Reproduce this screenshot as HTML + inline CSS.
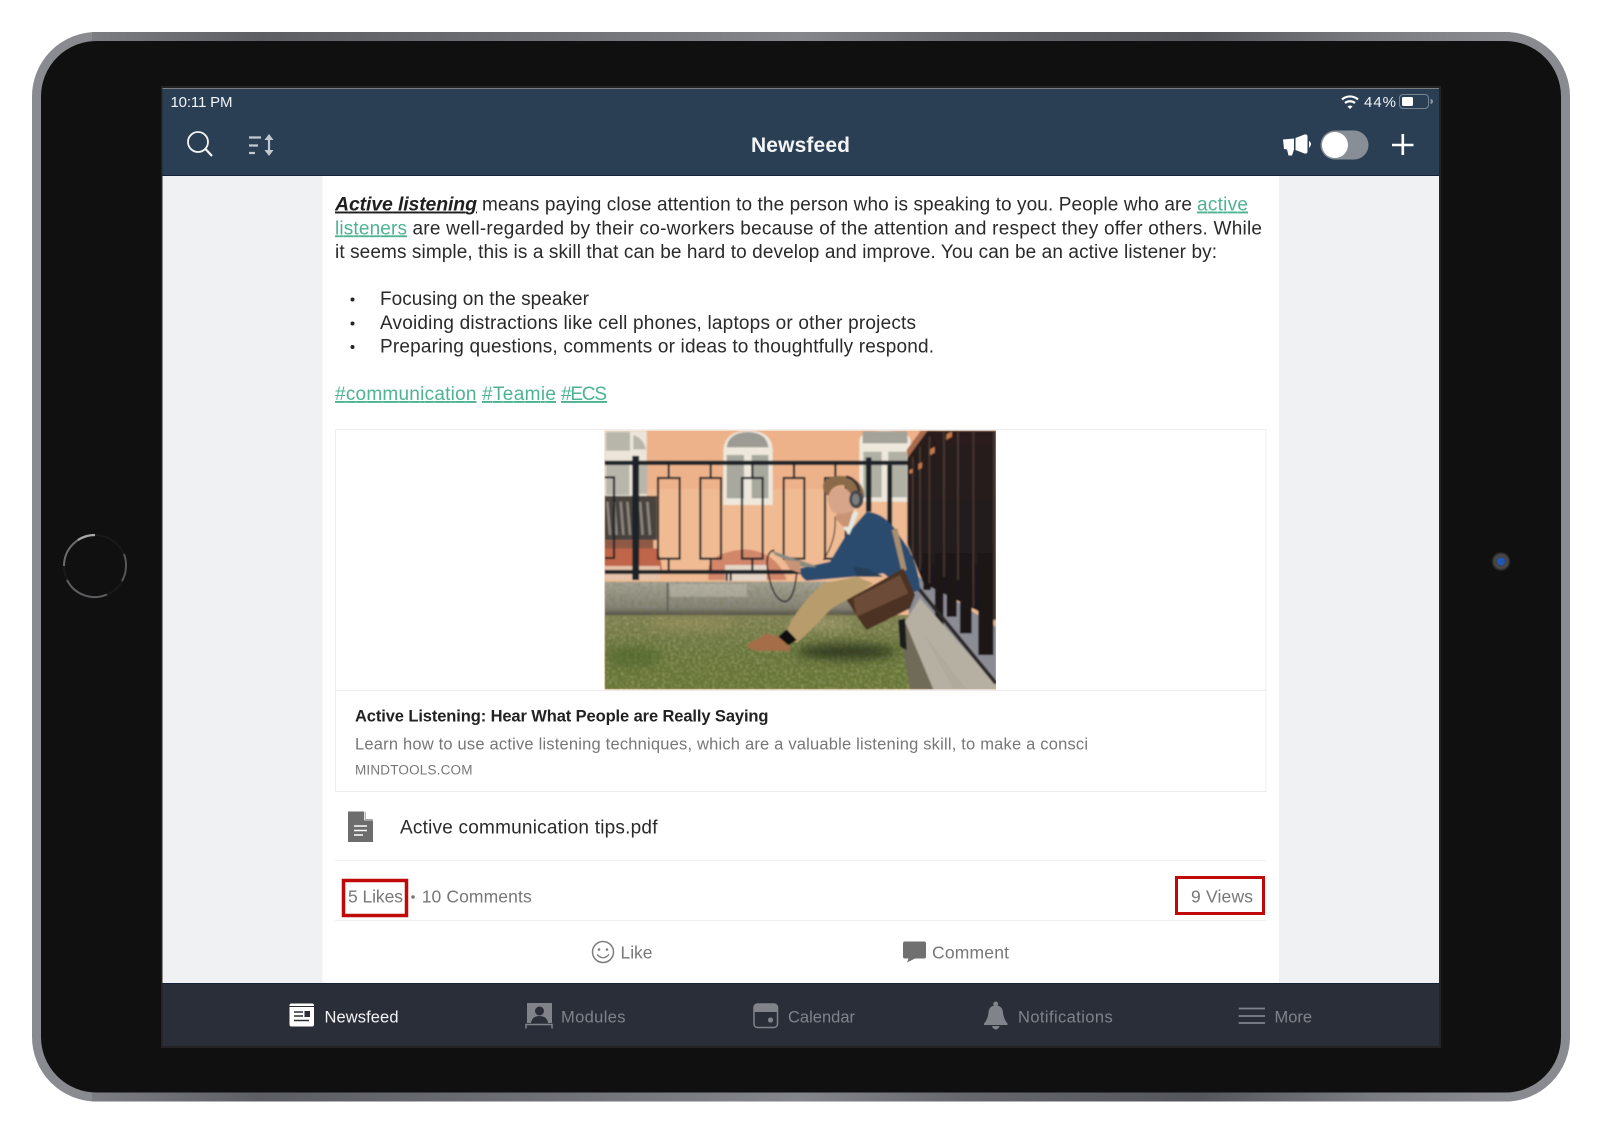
<!DOCTYPE html>
<html><head><meta charset="utf-8"><title>Newsfeed</title>
<style>
html,body{margin:0;padding:0;background:#fff}
svg{display:block}
text{font-family:"Liberation Sans",sans-serif}
.b{font-size:19px;fill:#2a2a2a}
.l{font-size:19px;fill:#4db391;text-decoration:underline}
.g{font-size:17.500px;fill:#777}
.t{font-size:16.500px;fill:#80838a}
</style></head><body>
<svg width="1600" height="1134" viewBox="0 0 1600 1134" xmlns="http://www.w3.org/2000/svg">
<defs>
<linearGradient id="fr" gradientUnits="userSpaceOnUse" x1="90" y1="0" x2="1510" y2="0">
<stop offset="0" stop-color="#7d7e83"/><stop offset=".12" stop-color="#5d5e63"/><stop offset=".3" stop-color="#6d6e73"/><stop offset=".5" stop-color="#85868b"/><stop offset=".62" stop-color="#65666b"/><stop offset=".78" stop-color="#55565b"/><stop offset=".9" stop-color="#7a7b80"/><stop offset="1" stop-color="#8b8c91"/>
</linearGradient>
<radialGradient id="cam"><stop offset="0" stop-color="#333"/><stop offset=".7" stop-color="#4a4a4a"/><stop offset="1" stop-color="#1a1a1a"/></radialGradient>
<linearGradient id="gr" x1="0" y1="0" x2="0" y2="1"><stop offset="0" stop-color="#7f7f52"/><stop offset=".5" stop-color="#667439"/><stop offset="1" stop-color="#647433"/></linearGradient>
<linearGradient id="wl" x1="0" y1="0" x2="0" y2="1"><stop offset="0" stop-color="#a7a396"/><stop offset=".75" stop-color="#868276"/><stop offset="1" stop-color="#47443d"/></linearGradient>
<linearGradient id="fd" x1="0" y1="0" x2="0" y2="1"><stop offset="0" stop-color="#2a1f1f"/><stop offset=".7" stop-color="#201a1c"/><stop offset="1" stop-color="#17161a"/></linearGradient>
<filter id="bl" x="-2%" y="-2%" width="104%" height="104%"><feGaussianBlur stdDeviation="2.400"/></filter>
<filter id="bs" x="-20%" y="-20%" width="140%" height="140%"><feGaussianBlur stdDeviation="14"/></filter>
<filter id="nd" x="0" y="0" width="100%" height="100%"><feTurbulence type="fractalNoise" baseFrequency=".09" numOctaves="3" seed="4"/><feColorMatrix values="0 0 0 0 .14  0 0 0 0 .18  0 0 0 0 .06  0 0 0 2.400 -1"/><feComposite in2="SourceGraphic" operator="in"/></filter>
<filter id="nl" x="0" y="0" width="100%" height="100%"><feTurbulence type="fractalNoise" baseFrequency=".12" numOctaves="3" seed="9"/><feColorMatrix values="0 0 0 0 .66  0 0 0 0 .64  0 0 0 0 .36  0 0 0 2.400 -1"/><feComposite in2="SourceGraphic" operator="in"/></filter>
<clipPath id="ic"><rect x="44" y="32" width="1174" height="776"/></clipPath>
</defs>
<rect width="1600" height="1134" fill="#fff"/>
<!-- device -->
<rect x="36.500" y="36.500" width="1529" height="1060.500" rx="60" ry="60" fill="#101010" stroke="#8a8b90" stroke-width="9"/>
<rect x="92" y="32" width="1418" height="9" fill="url(#fr)"/>
<rect x="92" y="1092.500" width="1418" height="9" fill="url(#fr)"/>
<!-- home -->
<circle cx="95" cy="566" r="31" fill="none" stroke="#191919" stroke-width="2"/>
<path d="M95 535A31 31 0 0 0 64 566" fill="none" stroke="#6c6c70" stroke-width="2"/>
<path d="M95 535A31 31 0 0 0 78 540" fill="none" stroke="#a8a8aa" stroke-width="2.200"/>
<path d="M67 580A31 31 0 0 0 107 594.500" fill="none" stroke="#5e5e62" stroke-width="2"/>
<path d="M126 566A31 31 0 0 0 124 554M126 566A31 31 0 0 1 122 581" fill="none" stroke="#55555a" stroke-width="2"/>
<!-- camera -->
<circle cx="1501" cy="561.500" r="9.500" fill="url(#cam)"/><circle cx="1501" cy="561.500" r="4" fill="#1f55b5"/>
<!-- screen -->
<rect x="161" y="86" width="1280" height="962" fill="#232323"/>
<rect x="162.500" y="88" width="1276.500" height="958" fill="#f0f1f3"/>
<rect x="162.500" y="88" width="1276.500" height="1" fill="#7b7d7e"/>
<rect x="162.500" y="89" width="1276.500" height="87" fill="#2a3f54"/>
<rect x="162.500" y="175" width="1276.500" height="1" fill="#142238"/>
<rect x="322.500" y="176" width="956.500" height="807" fill="#fff"/>
<!-- status -->
<text x="170.500" y="107" font-size="15px" fill="#f2f4f6" textLength="62" lengthAdjust="spacing">10:11 PM</text>
<g fill="none" stroke="#fff" stroke-width="2.200" stroke-linecap="butt">
<path d="M1342 99.500A12 12 0 0 1 1358 99.500"/><path d="M1345 103A8 8 0 0 1 1355 103"/>
</g><path d="M1347.500 106.500a4 4 0 0 1 5 0L1350 109Z" fill="#fff"/>
<text x="1364" y="107" font-size="15px" fill="#f2f4f6" textLength="32" lengthAdjust="spacing">44%</text>
<rect x="1399.500" y="94.500" width="29" height="14" rx="3.500" fill="none" stroke="#77838f" stroke-width="1"/>
<rect x="1402" y="97" width="11" height="9" rx="1.500" fill="#fff"/>
<path d="M1430.500 99v5a2.500 2.500 0 0 0 0-5Z" fill="#8c96a0"/>
<!-- header -->
<circle cx="198" cy="142" r="10" fill="none" stroke="#f4f5f6" stroke-width="1.800"/>
<path d="M205.500 149L212 156" stroke="#f4f5f6" stroke-width="2.200"/>
<g stroke="#c3c9cf" stroke-width="2.200"><path d="M249 137.500H261M249 145.500H258M249 153H255"/><path d="M269 137V153"/></g>
<path d="M264.500 140L269 134L273.500 140ZM264.500 150L269 156L273.500 150Z" fill="#c3c9cf"/>
<text x="751" y="152" font-size="21px" font-weight="bold" fill="#f2f4f5" textLength="99" lengthAdjust="spacing">Newsfeed</text>
<path d="M1283 139.500L1294 138.500V149.500L1292 155.500H1288.500L1287 149.500L1284 149ZM1295.500 138L1304.500 134.500Q1307 134 1307.500 136V152Q1307 154 1304.500 153.500L1295.500 150Z" fill="#fff"/>
<path d="M1309.500 142Q1311.500 144 1309.500 146.500Z" fill="#fff" stroke="#fff"/>
<rect x="1320.500" y="130.500" width="48" height="29" rx="14.500" fill="#878e96"/>
<circle cx="1335" cy="145" r="13" fill="#fff"/>
<path d="M1392 145H1413.500M1402.800 134V155" stroke="#fff" stroke-width="2.600"/>
<!-- body text -->
<text x="335" y="210.500" font-size="19.500px" font-weight="bold" font-style="italic" fill="#1f1f1f" text-decoration="underline" textLength="142" lengthAdjust="spacing">Active listening</text>
<text x="482" y="210.500" class="b" textLength="710" lengthAdjust="spacing">means paying close attention to the person who is speaking to you. People who are</text>
<text x="1197" y="210.500" class="l" textLength="51" lengthAdjust="spacing">active</text>
<text x="335" y="234.300" class="l" textLength="72" lengthAdjust="spacing">listeners</text>
<text x="412.500" y="234.300" class="b" textLength="849.500" lengthAdjust="spacing">are well-regarded by their co-workers because of the attention and respect they offer others. While</text>
<text x="335" y="258" class="b" textLength="882" lengthAdjust="spacing">it seems simple, this is a skill that can be hard to develop and improve. You can be an active listener by:</text>
<circle cx="352.500" cy="299.500" r="2" fill="#262626"/><circle cx="352.500" cy="323.500" r="2" fill="#262626"/><circle cx="352.500" cy="347" r="2" fill="#262626"/>
<text x="380" y="305" class="b" textLength="209" lengthAdjust="spacing">Focusing on the speaker</text>
<text x="380" y="329" class="b" textLength="536" lengthAdjust="spacing">Avoiding distractions like cell phones, laptops or other projects</text>
<text x="380" y="352.500" class="b" textLength="554" lengthAdjust="spacing">Preparing questions, comments or ideas to thoughtfully respond.</text>
<text x="335" y="400" class="l" textLength="141.500" lengthAdjust="spacing">#communication</text>
<text x="482" y="400" class="l" textLength="74" lengthAdjust="spacing">#Teamie</text>
<text x="561" y="400" class="l" textLength="46" lengthAdjust="spacing">#ECS</text>
<!-- card -->
<rect x="335.500" y="429.500" width="930.500" height="362" fill="#fff" stroke="#efefef"/>
<rect x="336" y="690" width="930" height="1" fill="#ececec"/>
<!-- photo -->
<g transform="translate(590,420) scale(.33333)" clip-path="url(#ic)">
<g filter="url(#bl)">
<rect x="40" y="28" width="1182" height="784" fill="#f0bb93"/>
<rect x="40" y="28" width="1000" height="180" fill="#eeb28b"/>
<!-- windows -->
<path d="M44 32H170V245H44Z" fill="#ece6da"/><path d="M48 36H120V92H48ZM130 45Q160 55 168 88H130ZM48 125H118V225H48ZM148 135H172V222H148Z" fill="#b8b6aa"/>
<path d="M400 255V90Q405 32 475 32Q545 32 548 90V255Z" fill="#eee8dc"/>
<path d="M410 82Q415 38 475 36Q530 38 535 82Z" fill="#9c9c94"/><path d="M410 105H462V235H410ZM485 105H535V235H485Z" fill="#a7a89e"/>
<path d="M808 245V60Q812 32 885 32Q955 32 962 60V245Z" fill="#eee8dc"/>
<path d="M818 70V34H952V70Z" fill="#a3a399"/><path d="M820 95H875V232H820ZM895 95H950V232H895Z" fill="#b0b0a4"/>
<!-- balcony, arches -->
<path d="M44 228H200V360H44Z" fill="#48423e"/><path d="M52 245l8 100M72 245l8 100M92 245l8 100M112 245l8 100M150 245l8 100M172 245l8 100" stroke="#8a857f" stroke-width="8"/>
<path d="M44 360H190V385H44Z" fill="#8f5a44"/>
<path d="M44 385H200Q215 420 215 450H44Z" fill="#c0654a"/>
<path d="M44 438H210V480H44Z" fill="#e6c3aa"/>
<path d="M355 480V440Q370 395 465 388Q560 395 590 480Z" fill="#d2866a"/>
<path d="M405 435H530V482H405Z" fill="#e4d6c6"/>
<!-- fence -->
<g fill="none" stroke="#1d2127" stroke-width="6">
<rect x="204" y="174" width="65" height="242"/><rect x="331" y="174" width="62" height="242"/><rect x="456" y="174" width="62" height="242"/><rect x="581" y="174" width="62" height="242"/><rect x="705" y="174" width="62" height="242"/><path d="M44 172H72V414H44"/>
<path d="M236 130V174M362 130V174M487 130V174M612 130V174M736 130V174M236 416V455M362 416V455M487 416V455M612 416V455M410 455V482M422 455V482"/>
</g>
<path d="M44 122H955V135H44Z" fill="#1e2228"/>
<path d="M44 450H640V462H44Z" fill="#1f2328"/>
<path d="M127 108H147V480H127ZM828 112H844V275H828ZM892 135H906V320H892Z" fill="#1d2127"/>
<!-- wall -->
<path d="M44 485H800V590H44Z" fill="url(#wl)"/>
<rect x="44" y="485" width="756" height="100" fill="#fff" filter="url(#nd)" opacity=".4"/>
<path d="M230 488H235V580H230Z" fill="#5e5b52"/>
<path d="M240 492H470V530H240Z" fill="#c2bdb0" opacity=".5"/>
<!-- grass -->
<path d="M44 585H960V808H44Z" fill="url(#gr)"/>
<rect x="44" y="590" width="916" height="218" fill="#fff" filter="url(#nd)" opacity=".45"/>
<rect x="44" y="590" width="916" height="218" fill="#fff" filter="url(#nl)" opacity=".4"/>
<g filter="url(#bs)"><ellipse cx="300" cy="612" rx="130" ry="14" fill="#9c9460" opacity=".7"/><ellipse cx="690" cy="612" rx="100" ry="14" fill="#a8a074" opacity=".7"/><ellipse cx="770" cy="695" rx="150" ry="24" fill="#26301b" opacity=".8"/><ellipse cx="130" cy="710" rx="80" ry="30" fill="#4d6228" opacity=".6"/></g>
<!-- right: steps, bars, rail, ledge -->
<path d="M952 370L985 470L1218 620V808H960Z" fill="#8c8c94"/>
<path d="M952 112L1012 32H1218V600L1000 490L952 370Z" fill="url(#fd)"/>
<path d="M1035 400H1060V625H1035ZM1070 400H1100V590H1070ZM1110 400H1145V640H1110ZM1165 400H1210V705H1165ZM1000 400H1022V510H1000Z" fill="#1a1719"/>
<path d="M968 110V420M990 80V450M1018 50V490M1062 32V470M1104 32V480M1150 32V560M1212 32V600" stroke="#4a3831" stroke-width="5"/>
<path d="M1070 42L1086 34V50L1068 60ZM1020 88L1034 80V98L1020 106ZM985 132L996 126V143L985 150ZM958 150L968 146V158L958 162Z" fill="#c47a4c"/>
<path d="M952 115L1012 32H992L950 90Z" fill="#a86c4e"/>
<path d="M925 610L945 600L1030 808H960Z" fill="#6f6b58"/>
<path d="M945 605L990 535L1218 795V808H1030Z" fill="#b6b0a2"/>
<path d="M1090 808L1000 640L1130 808Z" fill="#a9a395" opacity=".5"/>
<path d="M985 505L1218 790" stroke="#2c2826" stroke-width="11"/>
<path d="M925 600L945 595L950 690L930 680Z" fill="#1d1b1a"/>
<!-- person: legs -->
<path d="M600 610Q640 540 700 490L800 470L850 490L790 530Q730 560 720 570Q670 625 620 670L585 640Z" fill="#b89c6c"/>
<path d="M565 650L590 628L620 660L595 676Z" fill="#111"/>
<path d="M470 675L530 640L565 650L600 680L600 692H500Q475 688 470 675Z" fill="#a66d49"/>
<!-- person: jacket -->
<path d="M765 350L830 275Q890 280 930 350Q985 420 990 510L960 520L880 460L790 470L650 482Q628 470 630 445L720 425Z" fill="#2c4b6e"/>
<path d="M800 470L880 470L830 445L790 440Z" fill="#27405a"/>
<path d="M760 325L795 270L805 280L778 345Z" fill="#e8e8e0"/>
<!-- strap, bag -->
<path d="M905 330L922 325L950 450L935 455Z" fill="#a88e70"/>
<path d="M770 540L940 445L975 525L960 565L830 630L815 610Z" fill="#4b3223"/>
<path d="M790 535L930 465L955 520L800 590Z" fill="#6c4b37"/>
<!-- tablet, hand, cable -->
<path d="M545 392L670 435L680 442L635 440L555 405Z" fill="#898a80"/>
<path d="M580 418L630 425L632 460L600 448Z" fill="#c99376"/>
<path d="M553 390Q528 395 532 440Q545 540 585 545Q612 540 620 460" fill="none" stroke="#16181c" stroke-width="4"/>
<path d="M735 290Q740 360 700 420" fill="none" stroke="#22252a" stroke-width="3"/>
<!-- head -->
<path d="M735 295L745 270L790 270L775 320L760 320Z" fill="#c99376"/>
<path d="M712 240Q715 205 755 198L795 225L790 270Q760 290 725 275Z" fill="#d7a589"/>
<path d="M700 190Q720 160 775 170Q825 185 822 235L785 225L760 195Q725 195 715 228Q695 215 700 190Z" fill="#8a6a48"/>
<path d="M768 170Q800 175 808 215" fill="none" stroke="#2a2c30" stroke-width="7"/>
<ellipse cx="799" cy="238" rx="21" ry="27" fill="#44474a"/><ellipse cx="797" cy="238" rx="11" ry="17" fill="#7b7e80"/>
</g></g>
<text x="355" y="721.300" font-size="16.500px" font-weight="bold" fill="#222" textLength="413.500" lengthAdjust="spacing">Active Listening: Hear What People are Really Saying</text>
<text x="355" y="749.300" font-size="16.500px" fill="#777" textLength="733" lengthAdjust="spacing">Learn how to use active listening techniques, which are a valuable listening skill, to make a consci</text>
<text x="355" y="774.300" font-size="13.500px" fill="#777" textLength="117.500" lengthAdjust="spacing">MINDTOOLS.COM</text>
<!-- file -->
<path d="M348 811.500H365L373 819.500V842H348Z" fill="#6d6d6d"/>
<path d="M365.500 811.500V819H373Z" fill="#fff"/><path d="M364.500 811V820H373.500" fill="none" stroke="#fff" stroke-width=".8"/>
<path d="M354 826H367M354 830.500H367M354 835H363" stroke="#fff" stroke-width="1.500"/>
<text x="400" y="833.500" class="b" textLength="257.500" lengthAdjust="spacing">Active communication tips.pdf</text>
<rect x="335" y="860" width="931" height="1" fill="#efefef"/>
<rect x="335" y="920" width="931" height="1" fill="#f0f0f0"/>
<!-- stats -->
<text x="348" y="902.300" class="g" textLength="55" lengthAdjust="spacing">5 Likes</text>
<circle cx="413" cy="897" r="1.800" fill="#777"/>
<text x="421.700" y="902.300" class="g" textLength="110" lengthAdjust="spacing">10 Comments</text>
<text x="1191" y="902.300" class="g" textLength="62" lengthAdjust="spacing">9 Views</text>
<rect x="343.500" y="880.500" width="63" height="35" fill="none" stroke="#c00a0a" stroke-width="3.500"/>
<rect x="1176.500" y="877.500" width="87" height="36" fill="none" stroke="#c00a0a" stroke-width="3"/>
<!-- actions -->
<circle cx="603" cy="952" r="10.500" fill="none" stroke="#7d7d7d" stroke-width="1.500"/>
<circle cx="599" cy="949.500" r="1.300" fill="#7d7d7d"/><circle cx="607" cy="949.500" r="1.300" fill="#7d7d7d"/>
<path d="M597 954.500Q603 961 609 954.500" fill="none" stroke="#7d7d7d" stroke-width="1.300"/>
<text x="620.500" y="958.300" class="g" textLength="32" lengthAdjust="spacing">Like</text>
<path d="M905 941.500H924Q926 941.500 926 943.500V956.500Q926 958.500 924 958.500H915L907 962.500L908.500 958.500H905Q903 958.500 903 956.500V943.500Q903 941.500 905 941.500Z" fill="#707070"/>
<text x="932" y="958.300" class="g" textLength="77" lengthAdjust="spacing">Comment</text>
<!-- tab bar -->
<rect x="162.500" y="983" width="1276.500" height="63" fill="#2a2e39"/>
<rect x="162.500" y="983" width="1276.500" height="1" fill="#15203a"/>
<rect x="289.500" y="1003.500" width="24.500" height="23" rx="2" fill="#fff"/>
<rect x="289.500" y="1006" width="24.500" height="1" fill="#2a2e39"/>
<path d="M294 1012H303M294 1016H303M294 1020.500H309" stroke="#2a2e39" stroke-width="1.400"/><rect x="304.500" y="1011" width="5.500" height="6" fill="#2a2e39"/>
<text x="324.500" y="1022.500" font-size="16.500px" fill="#f2f3f4" textLength="74" lengthAdjust="spacing">Newsfeed</text>
<rect x="527" y="1003" width="25" height="20" fill="#80838a"/>
<circle cx="539.500" cy="1011" r="4.500" fill="#2a2e39"/><path d="M531 1023Q532 1016 539.500 1016Q547 1016 548 1023Z" fill="#2a2e39"/>
<path d="M526 1028.500V1024.500H552V1028.500" fill="none" stroke="#80838a" stroke-width="1.500"/>
<text x="561" y="1022.500" class="t" textLength="64.500" lengthAdjust="spacing">Modules</text>
<rect x="754" y="1004" width="23.500" height="23.500" rx="3.500" fill="none" stroke="#80838a" stroke-width="1.500"/>
<path d="M754 1012V1007.500Q754 1004 757.500 1004H774Q777.500 1004 777.500 1007.500V1012Z" fill="#80838a"/>
<circle cx="770.500" cy="1020" r="2.600" fill="#80838a"/>
<text x="788" y="1022.500" class="t" textLength="67" lengthAdjust="spacing">Calendar</text>
<circle cx="995.700" cy="1004" r="2.500" fill="#80838a"/>
<path d="M984 1023.500Q988 1019 988.500 1012Q989.500 1005.500 995.700 1005.500Q1002 1005.500 1003 1012Q1003.500 1019 1007.500 1023.500V1025H984Z" fill="#80838a"/>
<path d="M992 1026H999.500Q998.500 1029.500 995.700 1029.500Q993 1029.500 992 1026Z" fill="#80838a"/>
<text x="1018" y="1022.500" class="t" textLength="94.700" lengthAdjust="spacing">Notifications</text>
<path d="M1238.700 1008.500H1265M1238.700 1016H1265M1238.700 1023H1265" stroke="#80838a" stroke-width="1.800"/>
<text x="1274.500" y="1022.500" class="t" textLength="37.500" lengthAdjust="spacing">More</text>
</svg>
</body></html>
